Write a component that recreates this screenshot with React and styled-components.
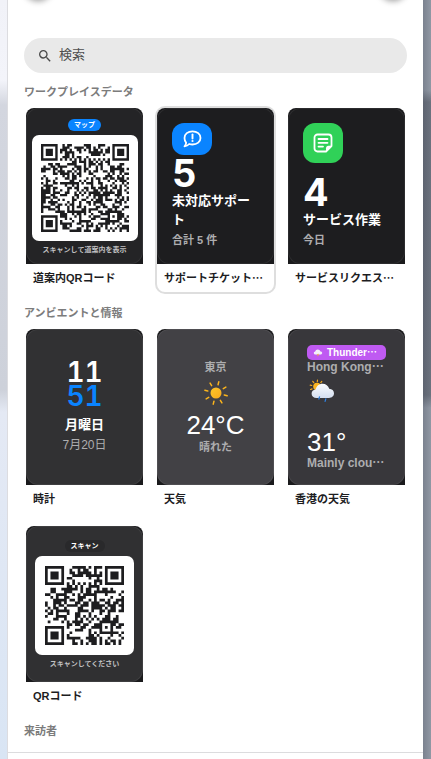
import React from "react";
import styled, { createGlobalStyle } from "styled-components";

const latin = `"Liberation Sans", "Noto Sans CJK JP", sans-serif`;
const japanese = `"Noto Sans CJK JP", sans-serif`;
const digits = `Inter, "Noto Sans CJK JP", sans-serif`;

const GlobalStyle = createGlobalStyle`
  * {
    box-sizing: border-box;
  }
  body {
    margin: 0;
    font-family: ${latin};
    color: #1d1d1f;
    overflow: hidden;
  }
  button {
    font: inherit;
    color: inherit;
  }
`;

const Page = styled.div`
  display: grid;
  grid-template-columns: 7px 1fr 8px;
  min-height: 100vh;
`;

const LeftEdge = styled.div`
  background: linear-gradient(
    #f1f2f8 0,
    #f3f4fa 80px,
    #d3d6df 105px,
    #cdd1da 390px,
    #e4e9f4 412px,
    #d9e5f4 759px
  );
`;

const RightEdge = styled.div`
  background: linear-gradient(
      transparent 90px,
      rgba(40, 44, 56, 0.35) 102px,
      rgba(40, 44, 56, 0.35) 395px,
      transparent 408px
    ),
    linear-gradient(to right, #7b828f, #9098a4);
`;

const Panel = styled.main`
  background: #fff;
  border-left: 1px solid #dcdce0;
  min-width: 0;
`;

const TopBar = styled.header`
  display: flex;
  justify-content: space-between;
  height: 38px;
  padding: 0 16px;
`;

const RoundButton = styled.button`
  width: 28px;
  height: 28px;
  margin-top: -28px;
  border: 0;
  border-radius: 50%;
  background: #fff;
  box-shadow: 0 1px 6px rgba(0, 0, 0, 0.4);
`;

const SearchBox = styled.label`
  display: flex;
  align-items: center;
  gap: 6px;
  height: 35px;
  margin: 0 16px;
  padding: 0 13px;
  border-radius: 18px;
  background: #e9e9e9;
`;

const SearchInput = styled.input`
  flex: 1;
  min-width: 0;
  padding: 0 0 5px;
  border: 0;
  outline: 0;
  background: none;
  font: 13px ${japanese};
  &::placeholder {
    color: #4e4e4e;
    opacity: 1;
  }
`;

const Section = styled.section`
  padding: 0 16px;
`;

const SectionTitle = styled.h2`
  height: 33px;
  margin: 0;
  padding-top: 10px;
  font: bold 11px/16px ${japanese};
  color: #7c7c7c;
`;

const Grid = styled.div`
  display: grid;
  grid-template-columns: repeat(3, 1fr);
  gap: 9px 10px;
`;

const Item = styled.button`
  display: block;
  min-width: 0;
  padding: 0;
  border: 2px solid ${(props) => (props.$selected ? "#dedede" : "transparent")};
  border-radius: 10px;
  background: none;
  text-align: left;
  cursor: pointer;
`;

const ItemTitle = styled.span`
  display: block;
  height: 28px;
  padding-left: 7px;
  font-size: 11px;
  font-weight: bold;
  line-height: 29px;
  white-space: nowrap;
  overflow: hidden;
`;

const Tile = styled.span`
  display: block;
  border-radius: 8px 8px 0 0;
  background: #1a1a1c;
  overflow: hidden;
`;

const Face = styled.span`
  display: flex;
  flex-direction: column;
  align-items: ${(props) => props.$align || "center"};
  height: 156px;
  padding: ${(props) => props.$pad || "10px 0 0"};
  border: 1px solid rgba(255, 255, 255, 0.07);
  border-radius: 12px;
  background: ${(props) => props.$bg};
  color: #fff;
`;

const Tag = styled.span`
  padding: 0 6px;
  border-radius: 6px;
  background: ${(props) => props.$bg};
  font-size: 7px;
  font-weight: bold;
  line-height: 12px;
`;

const CodeBox = styled.span`
  display: flex;
  margin: 4px 0;
  padding: ${(props) => props.$pad};
  border-radius: 7px;
  background: #fff;
`;

const Caption = styled.span`
  font-size: 7px;
  font-weight: bold;
  line-height: 9px;
  color: #c0c0c2;
`;

const IconBox = styled.span`
  display: flex;
  align-items: center;
  justify-content: center;
  width: 40px;
  height: ${(props) => props.$height};
  border-radius: ${(props) => props.$radius};
  background: ${(props) => props.$bg};
`;

const Count = styled.span`
  font-family: ${digits};
  font-size: 38px;
  font-weight: bold;
  line-height: 36px;
`;

const Label = styled.span`
  font-size: 13px;
  font-weight: bold;
  line-height: 19px;
`;

const Note = styled.span`
  font-size: ${(props) => props.$size || "11px"};
  font-weight: ${(props) => props.$weight || "bold"};
  line-height: ${(props) => props.$line || "22px"};
  color: #adadaf;
  white-space: nowrap;
`;

const ClockDigits = styled.span`
  font-family: ${digits};
  font-size: 28px;
  font-weight: 600;
  font-variant-numeric: tabular-nums;
  line-height: 24px;
  color: ${(props) => props.$color || "#fff"};
`;

const Temperature = styled.span`
  font-size: 26px;
  line-height: 28px;
`;

const Warning = styled.span`
  display: flex;
  align-items: center;
  align-self: stretch;
  gap: 4px;
  height: 15px;
  padding: 0 6px;
  border-radius: 5px;
  background: #bf5af2;
  font-size: 10px;
  font-weight: bold;
  white-space: nowrap;
`;

const Dots = styled.span`
  font-family: ${japanese};
  line-height: 1;
`;

const IconSlot = styled.span`
  display: flex;
  margin: ${(props) => props.$margin};
`;

const NextList = styled.div`
  margin-top: 7px;
  border-top: 1px solid #dcdcde;
`;

// ---- QR code (byte mode, level H) ----

const VERSIONS = {
  3: { blocks: [13, 13], ec: 22, align: 22 },
  5: { blocks: [11, 11, 12, 12], ec: 22, align: 30 },
};

const gfMul = (a, b) => {
  let r = 0;
  for (let i = 7; i >= 0; i--) {
    r = (r << 1) ^ ((r >> 7) * 0x11d);
    r ^= ((b >> i) & 1) * a;
  }
  return r;
};

const errorWords = (data, count) => {
  const gen = new Array(count).fill(0);
  gen[count - 1] = 1;
  let root = 1;
  for (let i = 0; i < count; i++) {
    for (let j = 0; j < count; j++) {
      gen[j] = gfMul(gen[j], root) ^ (gen[j + 1] || 0);
    }
    root = gfMul(root, 2);
  }
  const rest = new Array(count).fill(0);
  data.forEach((word) => {
    const factor = word ^ rest.shift();
    rest.push(0);
    gen.forEach((g, i) => {
      rest[i] ^= gfMul(g, factor);
    });
  });
  return rest;
};

const codeWords = (text, { blocks, ec }) => {
  const total = blocks.reduce((a, b) => a + b, 0);
  const bytes = Array.from(new TextEncoder().encode(text));
  let bits = "0100" + bytes.length.toString(2).padStart(8, "0");
  bytes.forEach((b) => {
    bits += b.toString(2).padStart(8, "0");
  });
  bits = (bits + "0000").slice(0, total * 8);
  const data = bits.match(/.{8}/g).map((b) => parseInt(b, 2));
  for (let pad = 0xec; data.length < total; pad ^= 0xec ^ 0x11) data.push(pad);
  let at = 0;
  const parts = blocks.map((size) => data.slice(at, (at += size)));
  const checks = parts.map((part) => errorWords(part, ec));
  const out = [];
  for (let i = 0; i < Math.max(...blocks); i++) {
    parts.forEach((part) => i < part.length && out.push(part[i]));
  }
  for (let i = 0; i < ec; i++) checks.forEach((c) => out.push(c[i]));
  return out;
};

const MASKS = [
  (x, y) => (x + y) % 2 === 0,
  (x, y) => y % 2 === 0,
  (x) => x % 3 === 0,
  (x, y) => (x + y) % 3 === 0,
  (x, y) => (Math.floor(x / 3) + Math.floor(y / 2)) % 2 === 0,
  (x, y) => ((x * y) % 2) + ((x * y) % 3) === 0,
  (x, y) => (((x * y) % 2) + ((x * y) % 3)) % 2 === 0,
  (x, y) => (((x + y) % 2) + ((x * y) % 3)) % 2 === 0,
];

const buildMatrix = (text, version, mask) => {
  const info = VERSIONS[version];
  const n = version * 4 + 17;
  const grid = Array.from({ length: n }, () => new Array(n).fill(false));
  const fixed = Array.from({ length: n }, () => new Array(n).fill(false));
  const set = (x, y, dark) => {
    if (x < 0 || y < 0 || x >= n || y >= n) return;
    grid[y][x] = dark;
    fixed[y][x] = true;
  };
  for (let i = 0; i < n; i++) {
    set(6, i, i % 2 === 0);
    set(i, 6, i % 2 === 0);
  }
  [
    [3, 3],
    [n - 4, 3],
    [3, n - 4],
  ].forEach(([cx, cy]) => {
    for (let dy = -4; dy <= 4; dy++) {
      for (let dx = -4; dx <= 4; dx++) {
        const d = Math.max(Math.abs(dx), Math.abs(dy));
        set(cx + dx, cy + dy, d !== 2 && d !== 4);
      }
    }
  });
  for (let dy = -2; dy <= 2; dy++) {
    for (let dx = -2; dx <= 2; dx++) {
      const d = Math.max(Math.abs(dx), Math.abs(dy));
      set(info.align + dx, info.align + dy, d !== 1);
    }
  }

  const level = (2 << 3) | mask;
  let rem = level;
  for (let i = 0; i < 10; i++) rem = (rem << 1) ^ ((rem >> 9) * 0x537);
  const format = ((level << 10) | rem) ^ 0x5412;
  const bit = (i) => ((format >> i) & 1) === 1;
  for (let i = 0; i <= 5; i++) set(8, i, bit(i));
  set(8, 7, bit(6));
  set(8, 8, bit(7));
  set(7, 8, bit(8));
  for (let i = 9; i < 15; i++) set(14 - i, 8, bit(i));
  for (let i = 0; i < 8; i++) set(n - 1 - i, 8, bit(i));
  for (let i = 8; i < 15; i++) set(8, n - 15 + i, bit(i));
  set(8, n - 8, true);

  const words = codeWords(text, info);
  let i = 0;
  for (let right = n - 1; right >= 1; right -= 2) {
    if (right === 6) right = 5;
    for (let v = 0; v < n; v++) {
      for (let j = 0; j < 2; j++) {
        const x = right - j;
        const y = ((right + 1) & 2) === 0 ? n - 1 - v : v;
        if (fixed[y][x]) continue;
        const dark = i < words.length * 8 && (words[i >> 3] >> (7 - (i & 7))) & 1;
        grid[y][x] = Boolean(dark) !== MASKS[mask](x, y);
        i++;
      }
    }
  }
  return grid;
};

const lineScore = (line) => {
  const text = line.map((d) => (d ? "1" : "0")).join("");
  let score = 0;
  (text.match(/1{5,}|0{5,}/g) || []).forEach((run) => {
    score += run.length - 2;
  });
  for (let i = 0; i + 11 <= text.length; i++) {
    const part = text.slice(i, i + 11);
    if (part === "10111010000" || part === "00001011101") score += 40;
  }
  return score;
};

const penalty = (grid) => {
  const n = grid.length;
  let score = 0;
  let dark = 0;
  for (let y = 0; y < n; y++) {
    score += lineScore(grid[y]) + lineScore(grid.map((row) => row[y]));
    for (let x = 0; x < n; x++) {
      if (grid[y][x]) dark++;
      if (x < n - 1 && y < n - 1) {
        const c = grid[y][x];
        if (c === grid[y][x + 1] && c === grid[y + 1][x] && c === grid[y + 1][x + 1]) {
          score += 3;
        }
      }
    }
  }
  return score + Math.floor(Math.abs((dark / n / n) * 20 - 10)) * 10;
};

const QrCode = ({ text, version, size, label }) => {
  const grid = MASKS.map((_, mask) => buildMatrix(text, version, mask)).reduce(
    (best, next) => (penalty(next) < penalty(best) ? next : best)
  );
  const n = grid.length;
  const path = grid
    .map((row, y) => row.map((d, x) => (d ? `M${x} ${y}h1v1h-1z` : "")).join(""))
    .join("");
  return (
    <svg width={size} height={size} viewBox={`0 0 ${n} ${n}`} role="img" aria-label={label}>
      <path d={path} fill="#1d1d1f" />
    </svg>
  );
};

// ---- icons ----

const SearchIcon = () => (
  <svg width="16" height="16" viewBox="0 0 24 24" fill="#4a4a4a">
    <path d="M15.5 14h-.79l-.28-.27A6.47 6.47 0 0 0 16 9.5 6.5 6.5 0 1 0 9.5 16c1.61 0 3.09-.59 4.23-1.57l.27.28v.79l5 4.99L20.49 19l-4.99-5zm-6 0C7.01 14 5 11.99 5 9.5S7.01 5 9.5 5 14 7.01 14 9.5 11.99 14 9.5 14z" />
  </svg>
);

const TicketIcon = () => (
  <svg width="20" height="18" viewBox="0 0 20 18" fill="none" stroke="#fff">
    <path
      d="M10.5 1.3c4.6 0 8 2.8 8 6.6s-3.4 6.6-8 6.6c-1.2 0-2.3-.2-3.3-.5-1.2 1.4-2.9 2.2-4.7 2.3 1-.9 1.6-2 1.7-3.5C3 11.6 2.500 9.900 2.500 7.900c0-3.800 3.400-6.600 8-6.600z"
      strokeWidth="1.8"
      strokeLinejoin="round"
    />
    <path d="M10.5 4.500v4" strokeWidth="1.9" strokeLinecap="round" />
    <circle cx="10.5" cy="11" r="1.100" fill="#fff" stroke="none" />
  </svg>
);

const NoteIcon = () => (
  <svg width="20" height="20" viewBox="0 0 20 20" fill="none" stroke="#fff" strokeWidth="1.8">
    <path
      d="M4.5 1.5h11a3 3 0 0 1 3 3v8.5l-5.5 5.5H4.5a3 3 0 0 1-3-3v-11a3 3 0 0 1 3-3z"
      strokeLinejoin="round"
    />
    <path d="M18 12.800h-2.500a2.500 2.500 0 0 0-2.500 2.500V18z" fill="#fff" stroke="none" />
    <path d="M5.5 6h9M5.5 9.800h9M5.5 13.600h4.500" strokeLinecap="round" />
  </svg>
);

const SunIcon = () => (
  <svg width="26" height="26" viewBox="0 0 26 26">
    <defs>
      <linearGradient id="sun" x1="0" y1="0" x2="1" y2="1">
        <stop offset="0" stopColor="#fcc62a" />
        <stop offset="1" stopColor="#f8a91c" />
      </linearGradient>
    </defs>
    <circle cx="13" cy="13" r="5.500" fill="url(#sun)" />
    <g stroke="#fbb41c" strokeWidth="1.500" strokeLinecap="round" transform="rotate(14 13 13)">
      {[0, 45, 90, 135, 180, 225, 270, 315].map((angle) => (
        <path key={angle} d="M13 1.500v3" transform={`rotate(${angle} 13 13)`} />
      ))}
    </g>
  </svg>
);

const SunRainIcon = () => (
  <svg width="28" height="24" viewBox="0 0 28 24">
    <defs>
      <linearGradient id="cloud" x1="0" y1="0" x2="0" y2="1">
        <stop offset="0" stopColor="#fbfdff" />
        <stop offset="1" stopColor="#d4deef" />
      </linearGradient>
    </defs>
    <circle cx="8" cy="7.5" r="3.8" fill="#fbb521" />
    <g stroke="#f4a91c" strokeWidth="1.2" strokeLinecap="round">
      <path d="M8.5 1.2l-.2 1.5M3.8 2.3l1 1.3M12.8 2.4l-1 1.2M1.2 6.2l1.600.3M1.6 10.5l1.500-.6" />
    </g>
    <path
      d="M7.500 19C4.700 19 2.600 17.200 2.600 14.700c0-2.300 1.700-4 4-4.200C7.400 7 10 4.700 13.500 4.700c3.300 0 5.900 2 6.700 5 2.800.1 4.800 2 4.800 4.600 0 2.700-2.100 4.700-5 4.700z"
      fill="url(#cloud)"
    />
    <path
      d="M10.5 17.8l-.6 2.200M16.8 19.8l-.7 2.600"
      stroke="#2f7fdc"
      strokeWidth="1.3"
      strokeLinecap="round"
    />
  </svg>
);

const StormIcon = () => (
  <svg width="10" height="8" viewBox="0 0 10 8">
    <path
      d="M2.6 5.6C1.4 5.6.8 5 .8 4.100c0-.8.6-1.400 1.400-1.500C2.500 1.400 3.500.6 4.800.6c1.300 0 2.300.8 2.600 2 1.100 0 1.800.6 1.800 1.500s-.7 1.500-1.800 1.500z"
      fill="#f4f0fa"
    />
    <path d="M5.3 4.2L3.8 6.3h1.1l-.4 1.5 1.7-2.3H5.1z" fill="#fbb521" />
  </svg>
);

const Widget = ({ title, selected, children }) => (
  <Item type="button" $selected={selected}>
    <Tile>{children}</Tile>
    <ItemTitle>{title}</ItemTitle>
  </Item>
);

const App = () => (
  <>
    <GlobalStyle />
    <Page lang="ja">
      <LeftEdge />
      <Panel>
        <TopBar>
          <RoundButton type="button" aria-label="戻る" />
          <RoundButton type="button" aria-label="閉じる" />
        </TopBar>
        <SearchBox>
          <SearchIcon />
          <SearchInput type="search" placeholder="検索" aria-label="検索" />
        </SearchBox>

        <Section>
          <SectionTitle>ワークプレイスデータ</SectionTitle>
          <Grid>
            <Widget title="道案内QRコード">
              <Face $bg="#242426">
                <Tag $bg="#0a84ff">マップ</Tag>
                <CodeBox $pad="9px">
                  <QrCode
                    text="https://www.offision.com/wayfinding"
                    version={5}
                    size={88}
                    label="道案内QRコード"
                  />
                </CodeBox>
                <Caption>スキャンして道案内を表示</Caption>
              </Face>
            </Widget>
            <Widget
              selected
              title={
                <>
                  サポートチケット<Dots>…</Dots>
                </>
              }
            >
              <Face $bg="#1d1d1f" $align="flex-start" $pad="14px 14px 0">
                <IconBox $bg="#0a84ff" $height="32px" $radius="12px">
                  <TicketIcon />
                </IconBox>
                <Count>5</Count>
                <Label>未対応サポート</Label>
                <Note>合計 5 件</Note>
              </Face>
            </Widget>
            <Widget
              title={
                <>
                  サービスリクエス<Dots>…</Dots>
                </>
              }
            >
              <Face $bg="#1d1d1f" $align="flex-start" $pad="14px 14px 0">
                <IconBox $bg="#30d158" $height="40px" $radius="12px">
                  <NoteIcon />
                </IconBox>
                <IconSlot $margin="11px 0 0">
                  <Count>4</Count>
                </IconSlot>
                <Label>サービス作業</Label>
                <Note>今日</Note>
              </Face>
            </Widget>
          </Grid>
        </Section>

        <Section>
          <SectionTitle>アンビエントと情報</SectionTitle>
          <Grid>
            <Widget title="時計">
              <Face $bg="#313133" $pad="30px 0 0">
                <ClockDigits>11</ClockDigits>
                <ClockDigits $color="#0a84ff">51</ClockDigits>
                <IconSlot $margin="7px 0 0">
                  <Label>月曜日</Label>
                </IconSlot>
                <Note $size="12px" $weight="normal">
                  7月20日
                </Note>
              </Face>
            </Widget>
            <Widget title="天気">
              <Face $bg="#424145" $pad="29px 0 0">
                <Note $line="16px">東京</Note>
                <IconSlot $margin="5px 0">
                  <SunIcon />
                </IconSlot>
                <Temperature>24°C</Temperature>
                <Note $line="16px">晴れた</Note>
              </Face>
            </Widget>
            <Widget title="香港の天気">
              <Face $bg="#38373b" $align="flex-start" $pad="15px 18px 0">
                <Warning>
                  <StormIcon />
                  <span>
                    Thunder<Dots>…</Dots>
                  </span>
                </Warning>
                <Note $size="12px" $line="14px">
                  Hong Kong<Dots>…</Dots>
                </Note>
                <IconSlot $margin="5px 0 25px 2px">
                  <SunRainIcon />
                </IconSlot>
                <Temperature>31°</Temperature>
                <Note $size="12px" $line="14px">
                  Mainly clou<Dots>…</Dots>
                </Note>
              </Face>
            </Widget>
            <Widget title="QRコード">
              <Face $bg="#303032" $pad="13px 0 0">
                <Tag $bg="#29292b">スキャン</Tag>
                <CodeBox $pad="10px">
                  <QrCode
                    text="https://www.offision.com"
                    version={3}
                    size={79}
                    label="QRコード"
                  />
                </CodeBox>
                <Caption>スキャンしてください</Caption>
              </Face>
            </Widget>
          </Grid>
        </Section>

        <Section>
          <SectionTitle>来訪者</SectionTitle>
        </Section>
        <NextList />
      </Panel>
      <RightEdge />
    </Page>
  </>
);

export default App;
